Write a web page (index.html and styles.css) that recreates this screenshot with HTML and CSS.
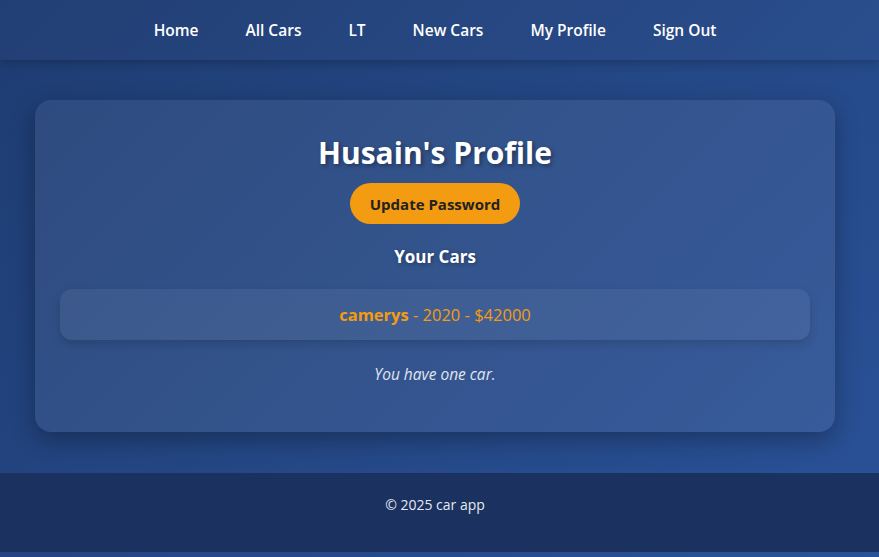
FILE: index.html
```html
<!DOCTYPE html>
<html lang="en">
<head>
<meta charset="utf-8">
<title>Profile</title>
<link rel="stylesheet" href="styles.css">
</head>
<body>
<header class="topbar">
  <nav class="nav">
    <a href="#">Home</a>
    <a href="#">All Cars</a>
    <a href="#">LT</a>
    <a href="#">New Cars</a>
    <a href="#">My Profile</a>
    <a href="#">Sign Out</a>
  </nav>
</header>
<main class="main">
  <section class="card">
    <h1 class="title">Husain's Profile</h1>
    <button class="btn">Update Password</button>
    <h2 class="subtitle">Your Cars</h2>
    <div class="car"><span><strong>camerys</strong> - 2020 - $42000</span></div>
    <p class="count">You have one car.</p>
  </section>
</main>
<footer class="footer">© 2025 car app</footer>
</body>
</html>
```
FILE: styles.css
```css
html {
  min-height: 100%;
  background: linear-gradient(135deg, #1e3c72, #2a5298);
}
body {
  margin: 0;
  font-family: "Open Sans", "Liberation Sans", sans-serif;
  color: #fff;
}
.topbar {
  height: 60px;
  padding-right: 9px;
  background: rgba(255,255,255,0.02);
  box-shadow: 0 2px 10px rgba(0,0,0,0.25);
  display: flex;
  align-items: center;
  justify-content: center;
}
.nav {
  display: flex;
  gap: 47px;
}
.nav a {
  color: #fff;
  text-decoration: none;
  font-weight: 600;
  font-size: 15.5px;
}
.main {
  padding: 40px 0 41px 35px;
}
.card {
  width: 800px;
  box-sizing: border-box;
  background: rgba(255,255,255,0.07);
  border-radius: 16px;
  box-shadow: 0 8px 24px rgba(0,0,0,0.3);
  padding: 30px 25px 48px;
  display: flex;
  flex-direction: column;
  align-items: center;
}
.title {
  margin: 0 0 7px;
  font-size: 30px;
  font-weight: 700;
  line-height: 46px;
  text-shadow: 2px 2px 4px rgba(0,0,0,0.35);
}
.btn {
  font-family: inherit;
  background: #f39c12;
  color: #222;
  border: none;
  border-radius: 21px;
  width: 170px;
  height: 41px;
  font-size: 15px;
  font-weight: 700;
}
.subtitle {
  margin: 21px 0 20px;
  font-size: 17px;
  font-weight: 700;
  line-height: 24px;
  text-shadow: 1px 1px 4px rgba(0,0,0,0.35);
}
.car {
  align-self: stretch;
  height: 51px;
  display: flex;
  align-items: center;
  justify-content: center;
  background: rgba(255,255,255,0.06);
  border-radius: 12px;
  box-shadow: 0 4px 10px rgba(0,0,0,0.15);
  color: #f39c12;
  font-size: 16.5px;
}
.count {
  margin: 24px 0 0;
  font-style: italic;
  color: #e0e4ee;
  font-size: 15.5px;
  line-height: 20px;
}
.footer {
  height: 79px;
  box-sizing: border-box;
  padding: 22px 9px 0 0;
  background: #1b3160;
  text-align: center;
  color: #e6e9f0;
  font-size: 14px;
  line-height: 20px;
}
```
